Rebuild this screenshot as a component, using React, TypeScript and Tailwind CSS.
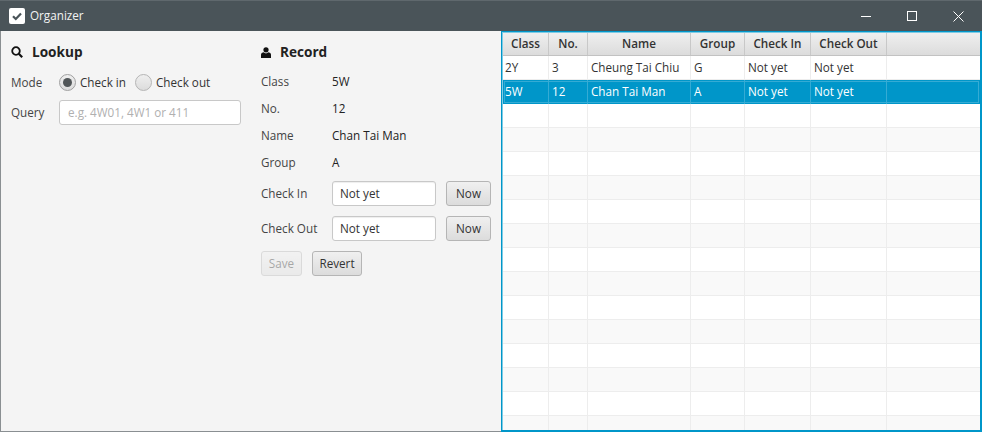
import React from "react";

const cols = ["w-[46px]", "w-[39px]", "w-[103px]", "w-[54px]", "w-[66px]", "w-[76px]", "flex-1"];
const headers = ["Class", "No.", "Name", "Group", "Check In", "Check Out", ""];
const rows = [
  ["2Y", "3", "Cheung Tai Chiu", "G", "Not yet", "Not yet", ""],
  ["5W", "12", "Chan Tai Man", "A", "Not yet", "Not yet", ""],
];
const empties = Array.from({ length: 14 }, (_, i) => i);

function Btn({ children, disabled, w }: { children: React.ReactNode; disabled?: boolean; w: string }) {
  return (
    <div
      className={`${w} h-[25px] flex items-center justify-center rounded-[3px] border border-[#b5b5b5] bg-gradient-to-b from-[#f0f0f0] to-[#dcdcdc] text-[#333] ${disabled ? "opacity-40" : ""}`}
    >
      {children}
    </div>
  );
}

function Field({ label, value }: { label: string; value: string }) {
  return (
    <div className="flex items-center h-[25px]">
      <div className="w-[71px] text-[#444]">{label}</div>
      <div className="w-[104px] h-[25px] rounded-[3px] border border-[#c8c8c8] bg-white pl-[7px] flex items-center text-[#333] shadow-[inset_0_1px_1px_#eee]">
        {value}
      </div>
      <div className="ml-[10px]">
        <Btn w="w-[45px]">Now</Btn>
      </div>
    </div>
  );
}

function Info({ label, value, h }: { label: string; value: string; h: string }) {
  return (
    <div className={`flex items-center ${h}`}>
      <div className="w-[71px] text-[#444]">{label}</div>
      <div className="text-[#222]">{value}</div>
    </div>
  );
}

function Radio({ checked }: { checked?: boolean }) {
  return (
    <div className={`w-[17px] h-[17px] rounded-full border bg-gradient-to-b from-[#efefef] to-[#dcdcdc] flex items-center justify-center ${checked ? "border-[#a0a0a0]" : "border-[#b5b5b5]"}`}>
      {checked && <div className="w-[9px] h-[9px] rounded-full bg-[#515658]" />}
    </div>
  );
}

export default function App() {
  return (
    <div className="w-[982px] h-[432px] flex flex-col bg-[#f4f4f4] overflow-hidden text-[11.7px] font-['Open_Sans',sans-serif]">
      <div className="h-[31px] shrink-0 bg-[#4a5459] flex items-center text-white border-t border-[#5f686d]">
        <div className="ml-[9px] w-4 h-4 rounded-[2px] bg-white flex items-center justify-center">
          <svg width="12" height="12" viewBox="0 0 12 12" fill="none">
            <path d="M2 6.2 L4.8 9 L10 3.4" stroke="#4a5459" strokeWidth="2.2" />
          </svg>
        </div>
        <div className="ml-[5px] text-[11.7px] text-[#f2f3f3]">Organizer</div>
        <div className="flex-1" />
        <svg width="10" height="10" viewBox="0 0 10 10" className="mr-[36px]">
          <path d="M0 5.5 H10" stroke="#fff" strokeWidth="1" />
        </svg>
        <svg width="10" height="10" viewBox="0 0 10 10" className="mr-[36px]">
          <rect x="0.5" y="0.5" width="9" height="9" fill="none" stroke="#fff" strokeWidth="1" />
        </svg>
        <svg width="11" height="11" viewBox="0 0 11 11" className="mr-[18px]">
          <path d="M0.5 0.5 L10.5 10.5 M10.5 0.5 L0.5 10.5" stroke="#fff" strokeWidth="1" />
        </svg>
      </div>

      <div className="flex-1 flex min-h-0">
        <div className="flex border-l border-b border-[#8a8f92]">
          <div className="w-[249px] pl-[10px] pt-[11px]">
            <div className="flex items-center h-[20px] text-[13.6px] font-bold text-[#222]">
              <svg width="12" height="12" viewBox="0 0 12 12" fill="none">
                <circle cx="5" cy="5" r="3.8" stroke="#111" strokeWidth="1.8" />
                <path d="M7.8 7.8 L11.2 11.2" stroke="#111" strokeWidth="2.2" />
              </svg>
              <span className="ml-[9px]">Lookup</span>
            </div>
            <div className="flex items-center mt-[10px] h-[21px]">
              <div className="w-[48px] text-[#444]">Mode</div>
              <Radio checked />
              <div className="ml-[4px] text-[#333] w-[55px]">Check in</div>
              <Radio />
              <div className="ml-[4px] text-[#333]">Check out</div>
            </div>
            <div className="flex items-center mt-[7px]">
              <div className="w-[48px] text-[#444]">Query</div>
              <div className="w-[182px] h-[25px] rounded-[3px] border border-[#c8c8c8] bg-white pl-2 flex items-center text-[#b0b0b0]">
                e.g. 4W01, 4W1 or 411
              </div>
            </div>
          </div>

          <div className="w-[251px] pl-[11px] pt-[11px]">
            <div className="flex items-center h-[20px] text-[13.6px] font-bold text-[#222]">
              <svg width="10" height="11" viewBox="0 0 10 11" fill="#111">
                <circle cx="5" cy="2.8" r="2.6" />
                <path d="M0 11 V7.5 Q0 5.5 2.5 5.2 L5 6.5 L7.5 5.2 Q10 5.5 10 7.5 V11 Z" />
              </svg>
              <span className="ml-[9px]">Record</span>
            </div>
            <div className="mt-[7px]">
              <Info h="h-[26px]" label="Class" value="5W" />
              <Info h="h-[27px]" label="No." value="12" />
              <Info h="h-[27px]" label="Name" value="Chan Tai Man" />
              <Info h="h-[27px]" label="Group" value="A" />
            </div>
            <div className="mt-[5px] flex flex-col gap-[10px]">
              <Field label="Check In" value="Not yet" />
              <Field label="Check Out" value="Not yet" />
            </div>
            <div className="mt-[10px] flex gap-[10px]">
              <Btn w="w-[41px]" disabled>Save</Btn>
              <Btn w="w-[50px]">Revert</Btn>
            </div>
          </div>
        </div>

        <div className="flex-1 min-w-0 border-t border-l border-r-2 border-b-2 border-[#0096c9]">
          <div className="h-full border-t border-l border-[#7fcbe4] bg-white overflow-hidden">
            <div className="flex h-[23px] border-b border-[#c2c2c2] bg-gradient-to-b from-[#efefef] to-[#dcdcdc] font-semibold text-[#333]">
              {headers.map((h, i) => (
                <div key={i} className={`${cols[i]} flex items-center justify-center ${i < 6 ? "border-r border-[#c8c8c8]" : ""}`}>
                  {h}
                </div>
              ))}
            </div>
            {rows.map((r, ri) => (
              <div
                key={ri}
                className={`flex h-[24px] ${ri === 1 ? "bg-[#0096c9] text-white shadow-[inset_0_0_0_1px_#0096c9,inset_0_0_0_2px_#35abd4]" : "bg-white text-[#333] border-b border-[#ededed]"}`}
              >
                {r.map((c, i) => (
                  <div key={i} className={`${cols[i]} flex items-center ${i === 0 ? "pl-[2px]" : "pl-[3px]"} ${i < 6 ? (ri === 1 ? "border-r border-[#35abd4]" : "border-r border-[#ededed]") : ""}`}>
                    {c}
                  </div>
                ))}
              </div>
            ))}
            {empties.map((e) => (
              <div key={e} className={`flex h-[24px] border-b border-[#ededed] ${e % 2 === 0 ? "bg-white" : "bg-[#f9f9f9]"}`}>
                {cols.map((c, i) => (
                  <div key={i} className={`${c} ${i < 6 ? "border-r border-[#ededed]" : ""}`} />
                ))}
              </div>
            ))}
          </div>
        </div>
      </div>
    </div>
  );
}
